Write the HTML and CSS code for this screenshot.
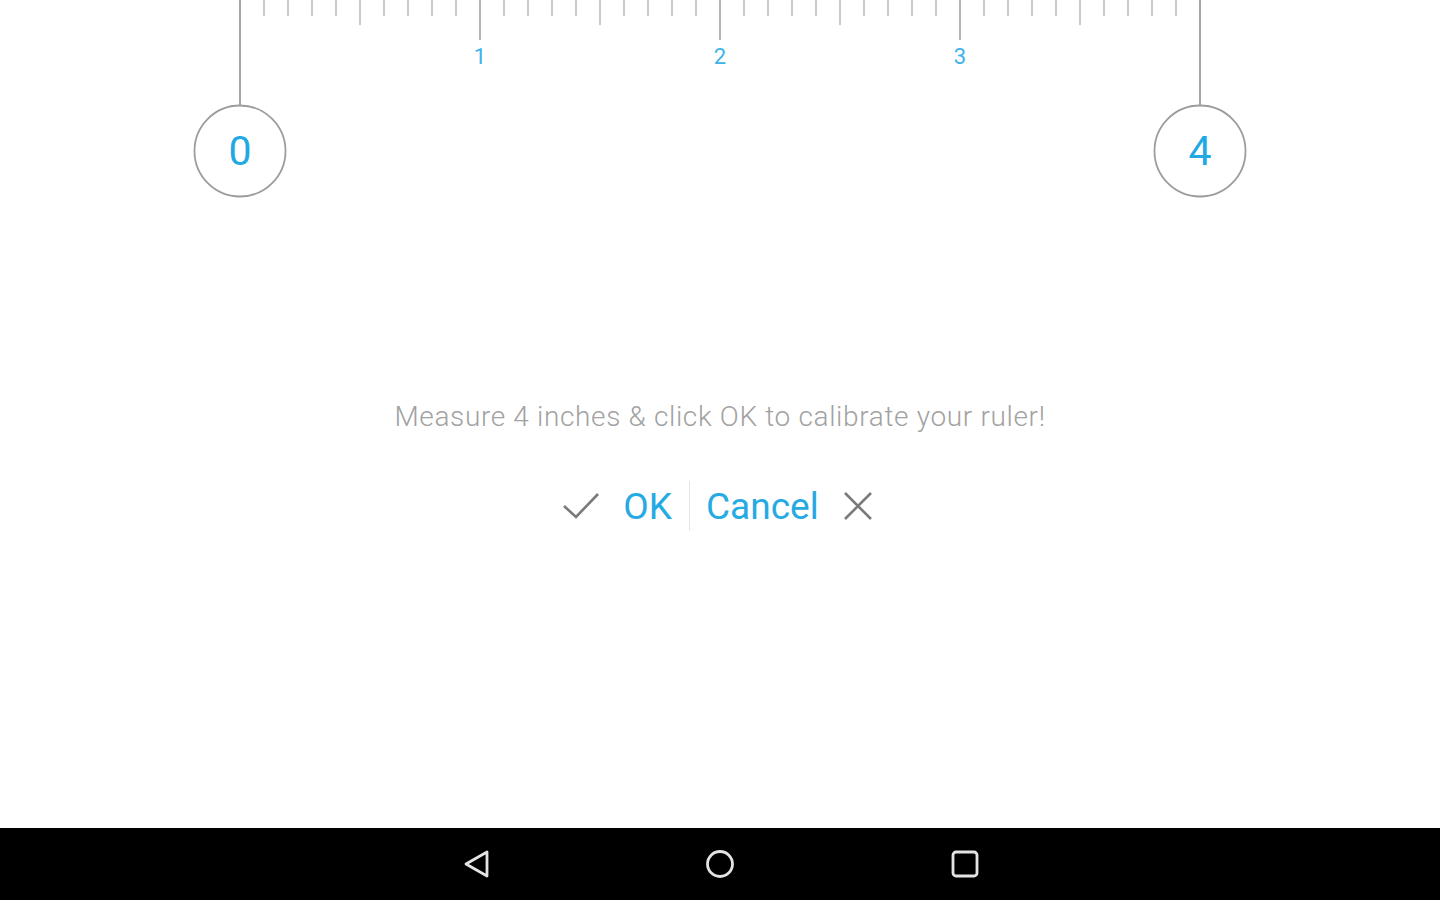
FILE: index.html
```html
<!DOCTYPE html>
<html lang="en">
<head>
  <meta charset="UTF-8" />
  <title>Ruler calibration</title>
  <link rel="stylesheet" href="styles.css">
</head>
<body>
  <div class="screen">
    <svg class="ruler" width="1440" height="200" viewBox="0 0 1440 200">
      <!-- tenth ticks -->
      <path class="tick" d="M264 0V16M288 0V16M312 0V16M336 0V16M384 0V16M408 0V16M432 0V16M456 0V16
        M504 0V16M528 0V16M552 0V16M576 0V16M624 0V16M648 0V16M672 0V16M696 0V16
        M744 0V16M768 0V16M792 0V16M816 0V16M864 0V16M888 0V16M912 0V16M936 0V16
        M984 0V16M1008 0V16M1032 0V16M1056 0V16M1104 0V16M1128 0V16M1152 0V16M1176 0V16" />
      <!-- half inch -->
      <path class="tick" d="M360 0V25M600 0V25M840 0V25M1080 0V25" />
      <!-- inches -->
      <path class="tick inch" d="M480 0V40M720 0V40M960 0V40" />
      <text class="num" x="480" y="64">1</text>
      <text class="num" x="720" y="64">2</text>
      <text class="num" x="960" y="64">3</text>

      <!-- handles -->
      <path class="edge" d="M240 0V105M1200 0V105" />
      <circle class="handle" cx="240" cy="151" r="45.5" />
      <circle class="handle" cx="1200" cy="151" r="45.5" />
      <text class="handle-num" x="240" y="165">0</text>
      <text class="handle-num" x="1200" y="165">4</text>
    </svg>

    <p class="message">Measure 4 inches &amp; click OK to calibrate your ruler!</p>

    <div class="actions">
      <div class="action">
        <svg width="40" height="34" viewBox="0 0 40 34">
          <path class="icon" d="M2 17L14 28L36 5" />
        </svg>
        <span>OK</span>
      </div>
      <div class="divider"></div>
      <div class="action cancel">
        <span>Cancel</span>
        <svg width="32" height="32" viewBox="0 0 32 32">
          <path class="icon" d="M3 3L29 29M29 3L3 29" />
        </svg>
      </div>
    </div>
  </div>

  <div class="navbar">
    <svg width="30" height="32" viewBox="0 0 30 32">
      <path class="nav-icon" d="M7 16L28 4V28Z" />
    </svg>
    <svg width="32" height="32" viewBox="0 0 32 32">
      <circle class="nav-icon" cx="17" cy="16" r="12.5" />
    </svg>
    <svg width="32" height="32" viewBox="0 0 32 32">
      <rect class="nav-icon" x="4" y="4" width="24" height="24" rx="3" />
    </svg>
  </div>
</body>
</html>
```

FILE: styles.css
```css
body { margin:0; background:#fff; font-family:Roboto, "Noto Sans", sans-serif; }
.screen { height:828px; background:#fff; overflow:hidden; }
.ruler { display:block; }
.tick { stroke:#cacaca; stroke-width:2; fill:none; }
.tick.inch { stroke:#b4b4b4; }
.edge { stroke:#a6a6a6; stroke-width:2; fill:none; }
.num { fill:#3db3e8; font-size:22px; text-anchor:middle; font-family:Roboto, sans-serif; }
.handle { fill:#fff; stroke:#9c9c9c; stroke-width:1.8; }
.handle-num { fill:#22a9e3; font-size:41px; text-anchor:middle; font-family:Roboto, sans-serif; }

.message { margin:197px 0 0; text-align:center; font-size:28px; line-height:40px; font-weight:300; letter-spacing:0.65px; color:#a2a2a2; }

.actions { margin-top:41px; height:56px; display:flex; justify-content:center; align-items:center; padding-right:4px; }
.action { display:flex; align-items:center; gap:21px; color:#26aae3; font-size:37px; }
.action.cancel { gap:23px; }
.icon { stroke:#7a7a7a; stroke-width:2.6; fill:none; }
.divider { width:1px; height:50px; background:#e6e6e6; margin:0 16px 0 17px; }

.navbar { height:72px; background:#000; display:flex; justify-content:center; align-items:center; gap:214px; }
.nav-icon { fill:none; stroke:#e4e4e4; stroke-width:2.8; stroke-linejoin:round; }
```
